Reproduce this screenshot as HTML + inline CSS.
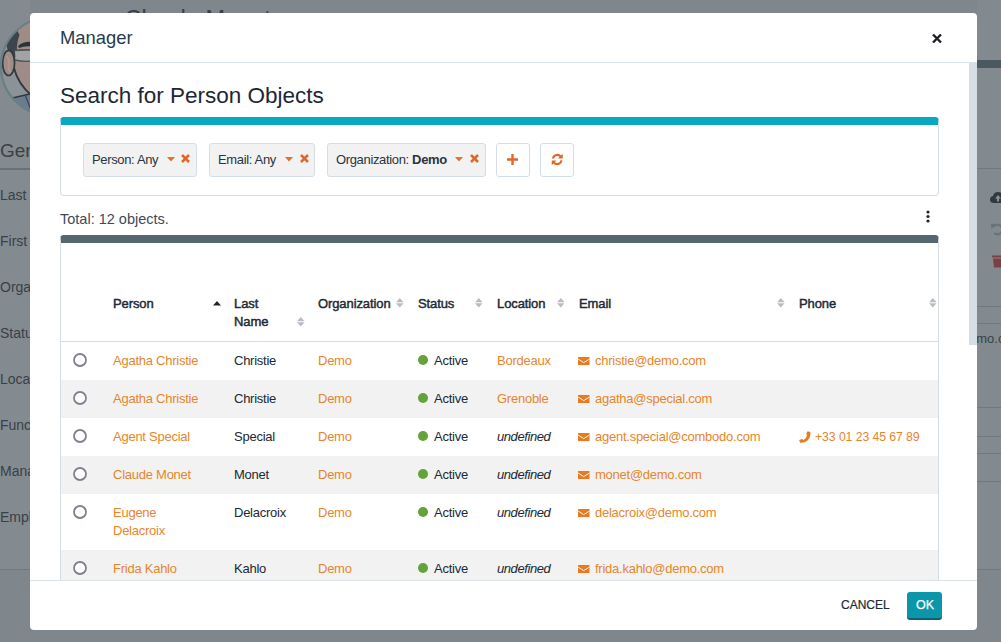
<!DOCTYPE html>
<html><head><meta charset="utf-8">
<style>
*{box-sizing:border-box;margin:0;padding:0}
html,body{width:1001px;height:642px;overflow:hidden}
body{font-family:"Liberation Sans",sans-serif;background:#80878c;position:relative;color:#212934}
.a{position:absolute;white-space:nowrap}
.bgt{color:#394047}
.bgl{position:absolute;height:1px;background:#6f787e}
.modal{position:absolute;left:30px;top:13px;width:947px;height:617px;background:#fff;border-radius:4px;overflow:hidden}
.clip{position:absolute;left:0;top:50px;width:947px;height:517px;overflow:hidden}
.in{position:absolute;left:-30px;top:-63px;width:1001px;height:642px}
.pill{position:absolute;top:143px;height:34px;background:#f2f2f2;border:1px solid #d5dde5;border-radius:3px}
.ptxt{position:absolute;top:152px;font-size:13px;line-height:16px;color:#2b3440;letter-spacing:-0.35px}
.btn{position:absolute;top:143px;height:34px;background:#fff;border:1px solid #d5dde5;border-radius:3px}
.th{position:absolute;font-size:13px;line-height:18px;font-weight:normal;color:#212934;letter-spacing:-0.1px;-webkit-text-stroke:0.45px #212934}
.c{position:absolute;font-size:13px;line-height:18px;color:#212934;letter-spacing:-0.25px;white-space:nowrap}
.l{color:#e8852b}
.i{font-style:italic;letter-spacing:-0.42px}
.stripe{position:absolute;left:61px;width:877px;background:#f2f2f2}
</style></head><body>

<!-- ===== background page ===== -->
<div class="a" style="left:0;top:0;width:30px;height:569px;background:#848b90"></div>
<div class="a" style="left:977px;top:0;width:24px;height:569px;background:#838a8f"></div>
<svg class="a" style="left:0;top:0" width="32" height="120" viewBox="0 0 32 120">
  <circle cx="50" cy="66.5" r="49" fill="#8b9398" stroke="#6b7f87" stroke-width="2"/>
  <path d="M19 27 Q25 24 32 24 L32 96 Q18 86 14 68 L15 40 Z" fill="#a08c87"/>
  <path d="M17 30 Q9 37 6.5 46 L8 51 Q12 53 14 58 L17.5 57 Q15.5 45 19.5 35 Z" fill="#3b454b"/>
  <path d="M18 46 Q24 41 32 42 L32 46.5 Q25 45.5 19 48 Z" fill="#2c3439"/>
  <path d="M15 50.5 L32 50 L32 61 Q22 61.5 15.5 60 Z" fill="#a2a3a5"/>
  <path d="M14 50.5 Q23 49.5 32 50" stroke="#4a545a" stroke-width="1.6" fill="none"/>
  <path d="M15 60 Q23 62 32 61" stroke="#4a545a" stroke-width="1.3" fill="none"/>
  <ellipse cx="8.6" cy="63" rx="6" ry="12.5" fill="#a08c87" stroke="#30383d" stroke-width="1.7"/>
  <path d="M6 56 Q10 58 9 66 Q8 70 11 72" stroke="#b39c96" stroke-width="1.2" fill="none"/>
  <path d="M14 68 Q18 84 32 96" stroke="#30383d" stroke-width="1.8" fill="none"/>
  <path d="M12.5 98 L32 93.5 L32 112 Q20 109 12.5 98 Z" fill="#6b7c91"/>
  <path d="M12.5 98 L32 93.5" stroke="#30383d" stroke-width="1.5" fill="none"/>
  <path d="M25 94.5 L31 110" stroke="#3a4550" stroke-width="1.2" fill="none"/>
  <circle cx="50" cy="66.5" r="49" fill="none" stroke="#6b7f87" stroke-width="2"/>
</svg>
<div class="a bgt" style="left:124.5px;top:3.5px;font-size:23.5px;line-height:30px;font-weight:normal">Claude Monet</div>
<div class="a bgt" style="left:0;top:140px;font-size:19px;line-height:22px">General</div>
<div class="bgl" style="left:0;top:168px;width:40px;height:1.5px;background:#67737a"></div>
<div class="a bgt" style="left:0;top:187px;font-size:14px;line-height:16px">Last</div>
<div class="a bgt" style="left:0;top:233px;font-size:14px;line-height:16px">First</div>
<div class="a bgt" style="left:0;top:279px;font-size:14px;line-height:16px">Organization</div>
<div class="a bgt" style="left:0;top:325px;font-size:14px;line-height:16px">Status</div>
<div class="a bgt" style="left:0;top:371px;font-size:14px;line-height:16px">Location</div>
<div class="a bgt" style="left:0;top:417px;font-size:14px;line-height:16px">Function</div>
<div class="a bgt" style="left:0;top:463px;font-size:14px;line-height:16px">Manager</div>
<div class="a bgt" style="left:0;top:509px;font-size:14px;line-height:16px">Employee</div>
<div class="bgl" style="left:0;top:569px;width:40px"></div>
<!-- right side -->
<div class="bgl" style="left:977px;top:60px;width:24px;height:8px;background:#4a5960"></div>
<div class="bgl" style="left:977px;top:168px;width:24px"></div>
<svg class="a" style="left:989.5px;top:190.5px" width="16" height="14" viewBox="0 0 16 14"><path d="M4 12 Q0 12 0 8.5 Q0 5.5 3 5 Q4 1 8 1 Q12 1 13 5 Q16 5.5 16 9 Q16 12 12.5 12 Z" fill="#2f393f"/><path d="M8 4 L11 7.5 L9 7.5 L9 10.5 L7 10.5 L7 7.5 L5 7.5 Z" fill="#8a9196"/></svg>
<svg class="a" style="left:990px;top:222px" width="14" height="14" viewBox="0 0 14 14"><path d="M3.5 4.8 A4.8 4.8 0 1 1 4.2 11" stroke="#66737a" stroke-width="2.2" fill="none"/><path d="M0.8 1.8 L6 2 L1.6 7 Z" fill="#66737a"/></svg>
<svg class="a" style="left:991.5px;top:253.5px" width="11" height="14" viewBox="0 0 11 14"><rect x="0" y="1.5" width="11" height="2" fill="#7f3f41"/><path d="M1 4.5 L10 4.5 L9 13.5 L2 13.5 Z" fill="#7f3f41"/></svg>
<div class="bgl" style="left:977px;top:306px;width:24px"></div>
<div class="bgl" style="left:977px;top:323px;width:24px"></div>
<div class="a bgt" style="left:969px;top:331px;font-size:13px;line-height:16px">emo.com</div>
<div class="bgl" style="left:977px;top:407px;width:24px"></div>
<div class="bgl" style="left:977px;top:436px;width:24px"></div>
<div class="bgl" style="left:977px;top:453px;width:24px"></div>
<div class="bgl" style="left:977px;top:481px;width:24px"></div>
<div class="bgl" style="left:977px;top:569px;width:24px"></div>

<!-- ===== modal ===== -->
<div class="modal">
  <div class="a" style="left:0;top:49px;width:947px;height:1px;background:#dbe2e8"></div>
  <div class="clip"><div class="in">
    <div class="a" style="left:60px;top:82.5px;font-size:22.5px;line-height:26px;color:#1d2733">Search for Person Objects</div>
    <!-- search form -->
    <div class="a" style="left:60px;top:117px;width:879px;height:79px;border:1px solid #d5dde5;border-top:8px solid #07a8c1;border-radius:4px"></div>
    <div class="pill" style="left:83px;width:114px"></div>
    <div class="ptxt" style="left:92px">Person: Any</div>
    <div class="pill" style="left:209px;width:106px"></div>
    <div class="ptxt" style="left:218px">Email: Any</div>
    <div class="pill" style="left:327px;width:159px"></div>
    <div class="ptxt" style="left:336px">Organization: <b style="letter-spacing:-0.3px">Demo</b></div>
    <div class="btn" style="left:496px;width:34px"></div>
    <div class="btn" style="left:540px;width:34px"></div>
    <div class="a" style="left:60px;top:209.5px;font-size:14.5px;line-height:18px;color:#3f4a55;letter-spacing:0px">Total: 12 objects.</div>
    <!-- table -->
    <div class="a" style="left:60px;top:235px;width:879px;height:400px;border:1px solid #d5dde5;border-top:8px solid #556670;border-radius:4px 4px 0 0"></div>
    <div class="a" style="left:61px;top:341px;width:877px;height:1px;background:#d5dde5"></div>
    <div class="stripe" style="top:380px;height:38px"></div>
    <div class="stripe" style="top:456px;height:38px"></div>
    <div class="stripe" style="top:550px;height:40px"></div>
    <div class="th" style="left:113px;top:295px">Person</div>
    <div class="th" style="left:234px;top:295px">Last<br>Name</div>
    <div class="th" style="left:318px;top:295px">Organization</div>
    <div class="th" style="left:418px;top:295px">Status</div>
    <div class="th" style="left:497px;top:295px">Location</div>
    <div class="th" style="left:579px;top:295px">Email</div>
    <div class="th" style="left:799px;top:295px">Phone</div>
    <svg class="a" style="left:166.5px;top:157px" width="8" height="5" viewBox="0 0 8 5"><path d="M0 0H8L4 4.5Z" fill="#e4702a"/></svg>
<svg class="a" style="left:181px;top:153.5px" width="9" height="9" viewBox="0 0 9 9"><path d="M1 1L8 8M8 1L1 8" stroke="#e0672a" stroke-width="2.5"/></svg>
<svg class="a" style="left:284.7px;top:157px" width="8" height="5" viewBox="0 0 8 5"><path d="M0 0H8L4 4.5Z" fill="#e4702a"/></svg>
<svg class="a" style="left:299.5px;top:153.5px" width="9" height="9" viewBox="0 0 9 9"><path d="M1 1L8 8M8 1L1 8" stroke="#e0672a" stroke-width="2.5"/></svg>
<svg class="a" style="left:455px;top:157px" width="8" height="5" viewBox="0 0 8 5"><path d="M0 0H8L4 4.5Z" fill="#e4702a"/></svg>
<svg class="a" style="left:470px;top:153.5px" width="9" height="9" viewBox="0 0 9 9"><path d="M1 1L8 8M8 1L1 8" stroke="#e0672a" stroke-width="2.5"/></svg>
<svg class="a" style="left:507px;top:154px" width="11" height="11" viewBox="0 0 11 11"><path d="M5.5 0V11M0 5.5H11" stroke="#e0672a" stroke-width="2.4"/></svg>
<svg class="a" style="left:550.5px;top:153px" width="12.5" height="13" viewBox="0 0 11 12"><path d="M1.6 5.2A4 4 0 0 1 8.6 3.2" stroke="#e0672a" stroke-width="1.9" fill="none"/><path d="M10.6 0.6V5H6.2Z" fill="#e0672a"/><path d="M9.4 6.8A4 4 0 0 1 2.4 8.8" stroke="#e0672a" stroke-width="1.9" fill="none"/><path d="M0.4 11.4V7H4.8Z" fill="#e0672a"/></svg>
<svg class="a" style="left:926px;top:210px" width="4" height="13" viewBox="0 0 4 13"><circle cx="2" cy="2" r="1.6" fill="#1f252b"/><circle cx="2" cy="6.5" r="1.6" fill="#1f252b"/><circle cx="2" cy="11" r="1.6" fill="#1f252b"/></svg>
<svg class="a" style="left:212.5px;top:301px" width="8" height="5" viewBox="0 0 8 5"><path d="M0 4.5H8L4 0Z" fill="#1f252b"/></svg>
<svg class="a" style="left:297.3px;top:317.4px" width="7.6" height="9.4" viewBox="0 0 8 10"><path d="M0 4.4H8L4 0Z M0 5.6H8L4 10Z" fill="#b8bcc2"/></svg>
<svg class="a" style="left:396.3px;top:298.4px" width="7.6" height="9.4" viewBox="0 0 8 10"><path d="M0 4.4H8L4 0Z M0 5.6H8L4 10Z" fill="#b8bcc2"/></svg>
<svg class="a" style="left:475.3px;top:298.4px" width="7.6" height="9.4" viewBox="0 0 8 10"><path d="M0 4.4H8L4 0Z M0 5.6H8L4 10Z" fill="#b8bcc2"/></svg>
<svg class="a" style="left:556.8px;top:298.4px" width="7.6" height="9.4" viewBox="0 0 8 10"><path d="M0 4.4H8L4 0Z M0 5.6H8L4 10Z" fill="#b8bcc2"/></svg>
<svg class="a" style="left:777.3px;top:298.4px" width="7.6" height="9.4" viewBox="0 0 8 10"><path d="M0 4.4H8L4 0Z M0 5.6H8L4 10Z" fill="#b8bcc2"/></svg>
<svg class="a" style="left:929.3px;top:298.4px" width="7.6" height="9.4" viewBox="0 0 8 10"><path d="M0 4.4H8L4 0Z M0 5.6H8L4 10Z" fill="#b8bcc2"/></svg>
<div id="rows">
<svg class="a" style="left:72px;top:352px" width="16" height="16" viewBox="0 0 16 16"><circle cx="8" cy="8" r="6" fill="#fff" stroke="#7f818d" stroke-width="1.8"/></svg>
<div class="c l" style="left:113px;top:352px">Agatha Christie</div>
<div class="c" style="left:234px;top:352px">Christie</div>
<div class="c l" style="left:318px;top:352px">Demo</div>
<div class="a" style="left:418px;top:355px;width:10px;height:10px;border-radius:50%;background:#64a23a"></div>
<div class="c" style="left:434px;top:352px">Active</div>
<div class="c l" style="left:497px;top:352px">Bordeaux</div>
<svg class="a" style="left:578px;top:356.5px" width="11.5" height="8.5" viewBox="0 0 11.5 8.5"><rect x="0" y="0" width="11.5" height="8.5" fill="#e87b1f"/><path d="M0 2L5.75 5.6L11.5 2" stroke="#fff" stroke-width="0.9" fill="none"/></svg>
<div class="c l" style="left:595px;top:352px">christie@demo.com</div>
<svg class="a" style="left:72px;top:390px" width="16" height="16" viewBox="0 0 16 16"><circle cx="8" cy="8" r="6" fill="#fff" stroke="#7f818d" stroke-width="1.8"/></svg>
<div class="c l" style="left:113px;top:390px">Agatha Christie</div>
<div class="c" style="left:234px;top:390px">Christie</div>
<div class="c l" style="left:318px;top:390px">Demo</div>
<div class="a" style="left:418px;top:393px;width:10px;height:10px;border-radius:50%;background:#64a23a"></div>
<div class="c" style="left:434px;top:390px">Active</div>
<div class="c l" style="left:497px;top:390px">Grenoble</div>
<svg class="a" style="left:578px;top:394.5px" width="11.5" height="8.5" viewBox="0 0 11.5 8.5"><rect x="0" y="0" width="11.5" height="8.5" fill="#e87b1f"/><path d="M0 2L5.75 5.6L11.5 2" stroke="#fff" stroke-width="0.9" fill="none"/></svg>
<div class="c l" style="left:595px;top:390px">agatha@special.com</div>
<svg class="a" style="left:72px;top:428px" width="16" height="16" viewBox="0 0 16 16"><circle cx="8" cy="8" r="6" fill="#fff" stroke="#7f818d" stroke-width="1.8"/></svg>
<div class="c l" style="left:113px;top:428px">Agent Special</div>
<div class="c" style="left:234px;top:428px">Special</div>
<div class="c l" style="left:318px;top:428px">Demo</div>
<div class="a" style="left:418px;top:431px;width:10px;height:10px;border-radius:50%;background:#64a23a"></div>
<div class="c" style="left:434px;top:428px">Active</div>
<div class="c i" style="left:497px;top:428px">undefined</div>
<svg class="a" style="left:578px;top:432.5px" width="11.5" height="8.5" viewBox="0 0 11.5 8.5"><rect x="0" y="0" width="11.5" height="8.5" fill="#e87b1f"/><path d="M0 2L5.75 5.6L11.5 2" stroke="#fff" stroke-width="0.9" fill="none"/></svg>
<div class="c l" style="left:595px;top:428px">agent.special@combodo.com</div>
<svg class="a" style="left:798.5px;top:431px" width="12" height="12" viewBox="0 0 12 12"><path d="M8.6 0.2L11.3 1.1Q11.9 6.5 8.2 9.8Q5 12.3 1.1 11.7L0.2 9L3.2 7.9L4.5 9.1Q7.5 7.5 8.1 4.1L7.1 3Z" fill="#e87b1f"/></svg>
<div class="c l" style="left:815px;top:428px;font-size:12.3px;letter-spacing:-0.1px">+33 01 23 45 67 89</div>
<svg class="a" style="left:72px;top:466px" width="16" height="16" viewBox="0 0 16 16"><circle cx="8" cy="8" r="6" fill="#fff" stroke="#7f818d" stroke-width="1.8"/></svg>
<div class="c l" style="left:113px;top:466px">Claude Monet</div>
<div class="c" style="left:234px;top:466px">Monet</div>
<div class="c l" style="left:318px;top:466px">Demo</div>
<div class="a" style="left:418px;top:469px;width:10px;height:10px;border-radius:50%;background:#64a23a"></div>
<div class="c" style="left:434px;top:466px">Active</div>
<div class="c i" style="left:497px;top:466px">undefined</div>
<svg class="a" style="left:578px;top:470.5px" width="11.5" height="8.5" viewBox="0 0 11.5 8.5"><rect x="0" y="0" width="11.5" height="8.5" fill="#e87b1f"/><path d="M0 2L5.75 5.6L11.5 2" stroke="#fff" stroke-width="0.9" fill="none"/></svg>
<div class="c l" style="left:595px;top:466px">monet@demo.com</div>
<svg class="a" style="left:72px;top:504px" width="16" height="16" viewBox="0 0 16 16"><circle cx="8" cy="8" r="6" fill="#fff" stroke="#7f818d" stroke-width="1.8"/></svg>
<div class="c l" style="left:113px;top:504px">Eugene<br>Delacroix</div>
<div class="c" style="left:234px;top:504px">Delacroix</div>
<div class="c l" style="left:318px;top:504px">Demo</div>
<div class="a" style="left:418px;top:507px;width:10px;height:10px;border-radius:50%;background:#64a23a"></div>
<div class="c" style="left:434px;top:504px">Active</div>
<div class="c i" style="left:497px;top:504px">undefined</div>
<svg class="a" style="left:578px;top:508.5px" width="11.5" height="8.5" viewBox="0 0 11.5 8.5"><rect x="0" y="0" width="11.5" height="8.5" fill="#e87b1f"/><path d="M0 2L5.75 5.6L11.5 2" stroke="#fff" stroke-width="0.9" fill="none"/></svg>
<div class="c l" style="left:595px;top:504px">delacroix@demo.com</div>
<svg class="a" style="left:72px;top:560px" width="16" height="16" viewBox="0 0 16 16"><circle cx="8" cy="8" r="6" fill="#fff" stroke="#7f818d" stroke-width="1.8"/></svg>
<div class="c l" style="left:113px;top:560px">Frida Kahlo</div>
<div class="c" style="left:234px;top:560px">Kahlo</div>
<div class="c l" style="left:318px;top:560px">Demo</div>
<div class="a" style="left:418px;top:563px;width:10px;height:10px;border-radius:50%;background:#64a23a"></div>
<div class="c" style="left:434px;top:560px">Active</div>
<div class="c i" style="left:497px;top:560px">undefined</div>
<svg class="a" style="left:578px;top:564.5px" width="11.5" height="8.5" viewBox="0 0 11.5 8.5"><rect x="0" y="0" width="11.5" height="8.5" fill="#e87b1f"/><path d="M0 2L5.75 5.6L11.5 2" stroke="#fff" stroke-width="0.9" fill="none"/></svg>
<div class="c l" style="left:595px;top:560px">frida.kahlo@demo.com</div>
</div>
  </div></div>
  <div class="a" style="left:939px;top:50px;width:8px;height:282px;background:#d5dde5"></div>
  <div class="a" style="left:0;top:567px;width:947px;height:1px;background:#dbe2e8"></div>
</div>
<div class="a" style="left:60px;top:27.8px;font-size:18.4px;line-height:20px;color:#2a3b4c">Manager</div>
<svg class="a" style="left:932px;top:34px" width="10" height="9" viewBox="0 0 10 9"><path d="M1 0.5L9 8.5M9 0.5L1 8.5" stroke="#1b1f24" stroke-width="2.3"/></svg>
<div class="a" style="left:841px;top:598px;font-size:12px;line-height:14px;color:#212934;-webkit-text-stroke:0.2px #212934">CANCEL</div>
<div class="a" style="left:907px;top:592px;width:35px;height:27.5px;background:#0c96a9;border-bottom:2px solid #08636f;border-radius:3px"></div>
<div class="a" style="left:916px;top:598px;font-size:12.5px;line-height:14px;color:#fff;-webkit-text-stroke:0.25px #fff">OK</div>
</body></html>
